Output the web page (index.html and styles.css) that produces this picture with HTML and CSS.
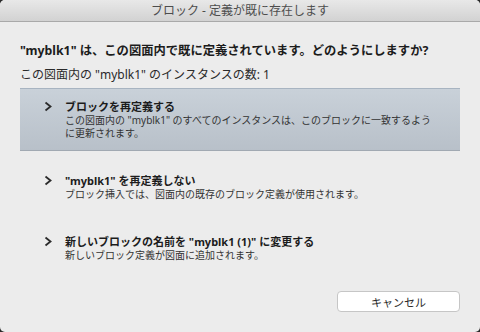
FILE: index.html
```html
<!DOCTYPE html>
<html lang="ja">
<head>
    <meta charset="UTF-8">
    <meta name="viewport" content="width=device-width, initial-scale=1.0">
    <title>ブロック - 定義が既に存在します</title>
    <link rel="stylesheet" href="styles.css">
</head>
<body>
    <div class="window">
        <div class="titlebar">ブロック - 定義が既に存在します</div>
        <div class="content">
            <p class="question">"myblk1" は、この図面内で既に定義されています。どのようにしますか?</p>
            <p class="count">この図面内の "myblk1" のインスタンスの数: 1</p>

            <div class="options">
                <div class="option selected">
                    <svg class="chevron" width="8" height="11" viewBox="0 0 8 11"><polyline points="1.5,1.5 6.5,5.5 1.5,9.5" /></svg>
                    <div class="option-text">
                        <div class="option-title">ブロックを再定義する</div>
                        <div class="option-desc">この図面内の "myblk1" のすべてのインスタンスは、このブロックに一致するように更新されます。</div>
                    </div>
                </div>
                <div class="option">
                    <svg class="chevron" width="8" height="11" viewBox="0 0 8 11"><polyline points="1.5,1.5 6.5,5.5 1.5,9.5" /></svg>
                    <div class="option-text">
                        <div class="option-title">"myblk1" を再定義しない</div>
                        <div class="option-desc">ブロック挿入では、図面内の既存のブロック定義が使用されます。</div>
                    </div>
                </div>
                <div class="option">
                    <svg class="chevron" width="8" height="11" viewBox="0 0 8 11"><polyline points="1.5,1.5 6.5,5.5 1.5,9.5" /></svg>
                    <div class="option-text">
                        <div class="option-title">新しいブロックの名前を "myblk1 (1)" に変更する</div>
                        <div class="option-desc">新しいブロック定義が図面に追加されます。</div>
                    </div>
                </div>
            </div>

            <div class="buttons">
                <button type="button" class="cancel">キャンセル</button>
            </div>
        </div>
    </div>
</body>
</html>
```

FILE: styles.css
```css
html, body {
    margin: 0;
    padding: 0;
    background: #2a2a2a;
}
body {
    font-family: "Noto Sans", "Noto Sans CJK JP", sans-serif;
    color: #222;
}
.window {
    width: 480px;
    height: 332px;
    background: #ececec;
    border-radius: 5px;
    overflow: hidden;
    display: flex;
    flex-direction: column;
}
.titlebar {
    height: 21px;
    line-height: 22px;
    text-align: center;
    font-size: 12px;
    color: #4d4d4d;
    background: linear-gradient(#e8e8e8, #d2d2d2);
    border-bottom: 1px solid #a9a9a9;
}
.content {
    flex: 1;
    padding: 0 20px;
    display: flex;
    flex-direction: column;
}
.question {
    margin: 21px 0 0;
    font-size: 12.3px;
    font-weight: bold;
    line-height: 16px;
    color: #1c1c1c;
}
.count {
    margin: 8px 0 0;
    font-size: 12px;
    line-height: 16px;
    color: #2a2a2a;
}
.options {
    margin-top: 5px;
    display: flex;
    flex-direction: column;
    gap: 11px;
}
.option {
    display: flex;
    align-items: flex-start;
    padding: 10px 0 10px 24px;
    border-top: 1px solid transparent;
    border-bottom: 1px solid transparent;
}
.option.selected {
    background: linear-gradient(#c9d1d9, #b8c0c9);
    border-top-color: #a8b4c1;
    border-bottom-color: #a1a9b2;
}
.chevron {
    margin-top: 2px;
    width: 8px;
    height: 11px;
    flex: none;
}
.chevron polyline {
    fill: none;
    stroke: #2b2b2b;
    stroke-width: 1.8;
}
.option-text {
    margin-left: 13px;
    width: 368px;
}
.option-title {
    font-size: 11px;
    font-weight: bold;
    line-height: 15px;
    color: #1c1c1c;
}
.option-desc {
    font-size: 10px;
    line-height: 13px;
    color: #333;
}
.buttons {
    margin-top: auto;
    margin-bottom: 20px;
    display: flex;
    justify-content: flex-end;
}
.cancel {
    width: 123px;
    height: 21px;
    padding: 0;
    font-family: inherit;
    font-size: 11px;
    color: #2a2a2a;
    background: #fff;
    border: 1px solid #c6c6c6;
    border-radius: 4px;
}
```
